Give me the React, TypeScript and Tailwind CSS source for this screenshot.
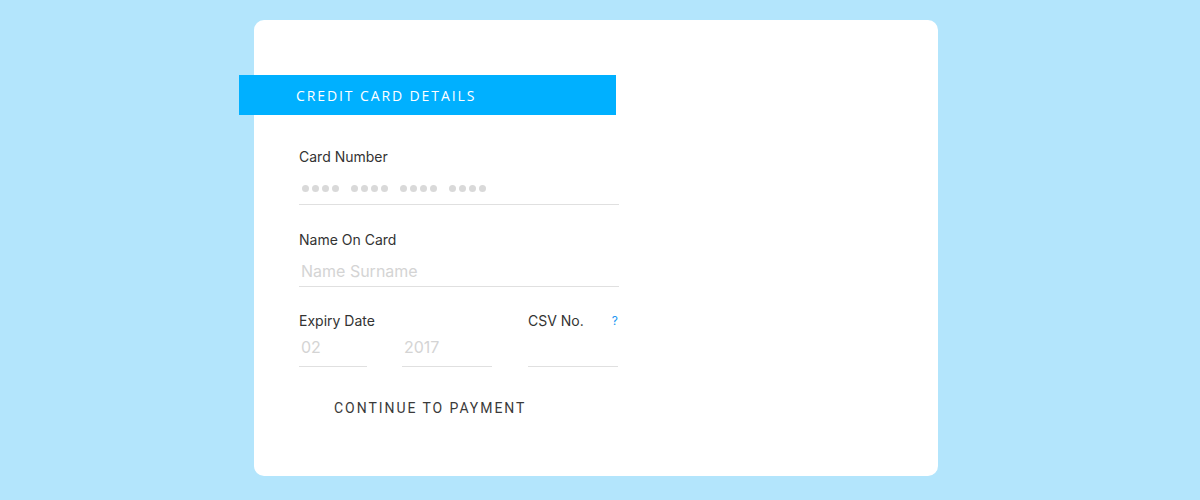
export default function App() {
  const sans = { fontFamily: '"Inter", "Liberation Sans", sans-serif' };

  return (
    <div className="h-[500px] w-full bg-[#b3e5fc] pt-5" style={sans}>
      <div className="ml-[254px] h-[456px] w-[684px] rounded-[10px] bg-white pt-[55px]">
        {/* header strip */}
        <div
          className="-ml-[15px] flex h-10 w-[377px] items-center bg-[#00b0ff] pl-[57px] text-[14px] tracking-[1.9px] text-white"
          style={{ fontFamily: '"Open Sans", "Liberation Sans", sans-serif' }}
        >
          CREDIT CARD DETAILS
        </div>

        <form className="ml-[45px] w-[320px] pt-[34px]" onSubmit={(e) => e.preventDefault()}>
          {/* card number */}
          <label className="block text-[14px] leading-4 text-[#333]">Card Number</label>
          <div className="mt-[7px] flex h-[33px] items-center gap-[12px] border-b border-[#e0e0e0] pl-[3px]">
            {[0, 1, 2, 3].map((g) => (
              <div key={g} className="flex gap-[3px]">
                {[0, 1, 2, 3].map((d) => (
                  <span key={d} className="h-[7px] w-[7px] rounded-full bg-[#d9d9d9]" />
                ))}
              </div>
            ))}
          </div>

          {/* name */}
          <label className="mt-[27px] block text-[14px] leading-4 text-[#333]">Name On Card</label>
          <input
            className="mt-[7px] h-[32px] w-full border-b border-[#e0e0e0] pl-[2px] text-[16px] outline-none placeholder:text-[#d4d4d4]"
            placeholder="Name Surname"
            style={sans}
          />

          {/* expiry + csv */}
          <div className="mt-[26px] flex">
            <div className="flex flex-col">
              <label className="block text-[14px] leading-4 text-[#333]">Expiry Date</label>
              <div className="mt-[7px] flex gap-[35px]">
                <input
                  className="h-[31px] w-[68px] border-b border-[#e0e0e0] pb-[9px] pl-[2px] text-[16px] outline-none placeholder:text-[#d4d4d4]"
                  placeholder="02"
                  style={sans}
                />
                <input
                  className="h-[31px] w-[90px] border-b border-[#e0e0e0] pb-[9px] pl-[2px] text-[16px] outline-none placeholder:text-[#d4d4d4]"
                  placeholder="2017"
                  style={sans}
                />
              </div>
            </div>
            <div className="ml-[36px] flex w-[90px] flex-col">
              <div className="flex items-center justify-between leading-4">
                <label className="text-[14px] text-[#333]">CSV No.</label>
                <span className="text-[12px] text-[#2196f3]">?</span>
              </div>
              <input
                className="mt-[7px] h-[31px] w-full border-b border-[#e0e0e0] pb-[9px] text-[16px] outline-none"
                style={sans}
              />
            </div>
          </div>

          <button
            type="submit"
            className="ml-[35px] mt-[31px] text-[14px] tracking-[1.95px] text-[#3a3a3a]"
            style={{ fontFamily: '"Roboto", "Liberation Sans", sans-serif' }}
          >
            CONTINUE TO PAYMENT
          </button>
        </form>
      </div>
    </div>
  );
}
